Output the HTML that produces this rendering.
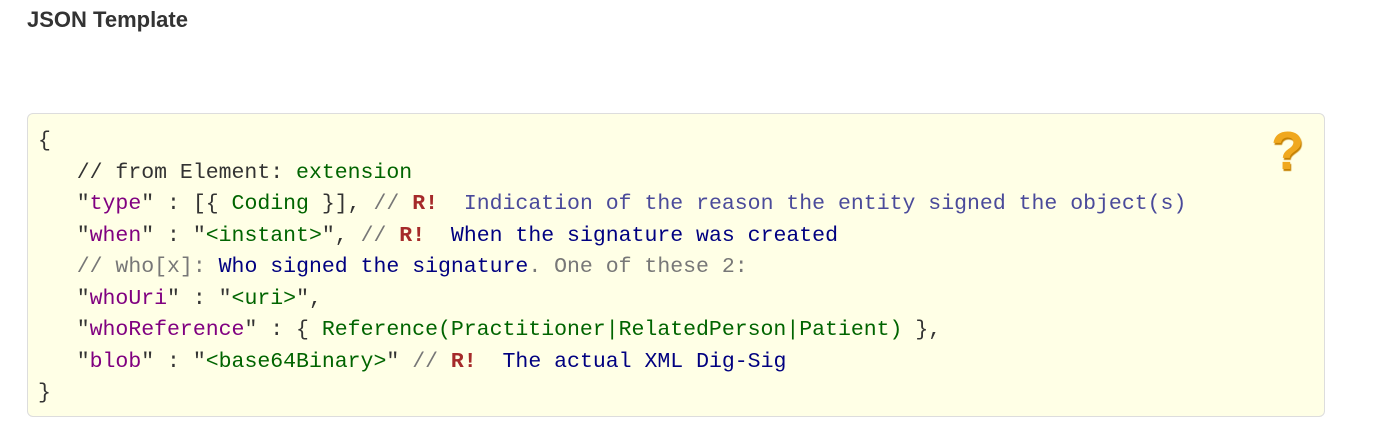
<!DOCTYPE html>
<html><head><style>
body{margin:0;background:#fff;width:1386px;height:428px;overflow:hidden;font-family:"Liberation Sans",sans-serif}
h3{position:absolute;left:27px;top:7px;margin:0;font-size:22px;font-weight:bold;color:#333}
.box{position:absolute;left:27px;top:113px;width:1298px;height:304px;background:#ffffe6;border:1px solid #ddd;border-radius:6px;box-sizing:border-box}
pre{position:absolute;left:38px;top:126px;margin:0;font-family:"Liberation Mono",monospace;font-size:21.5px;line-height:31.5px;color:#333}
.p{color:#800080}.g{color:#006400}.r{color:#a52a2a;font-weight:bold}.b{color:#191970}.c{color:#777}.n{color:#000080}
.q{position:absolute;left:1271px;top:120px;font-size:54px;font-weight:bold;color:#f0a81e;text-shadow:1px 2px 1px #c58000}
</style></head><body>
<h3>JSON Template</h3>
<div class="box"></div>
<div class="q">?</div>
<pre>{
   // from Element: <span class="g">extension</span>
   "<span class="p">type</span>" : [{ <span class="g">Coding</span> }], <span class="c">//</span> <span class="r">R!</span>  <span style="color:#4a4a9a">Indication of the reason the entity signed the object(s)</span>
   "<span class="p">when</span>" : "<span class="g">&lt;instant&gt;</span>", <span class="c">//</span> <span class="r">R!</span>  <span class="n">When the signature was created</span>
   <span class="c">// who[x]: </span><span class="n">Who signed the signature</span><span class="c">. One of these 2:</span>
   "<span class="p">whoUri</span>" : "<span class="g">&lt;uri&gt;</span>",
   "<span class="p">whoReference</span>" : { <span class="g">Reference(Practitioner|RelatedPerson|Patient)</span> },
   "<span class="p">blob</span>" : "<span class="g">&lt;base64Binary&gt;</span>" <span class="c">//</span> <span class="r">R!</span>  <span class="n">The actual XML Dig-Sig</span>
}</pre>
</body></html>
